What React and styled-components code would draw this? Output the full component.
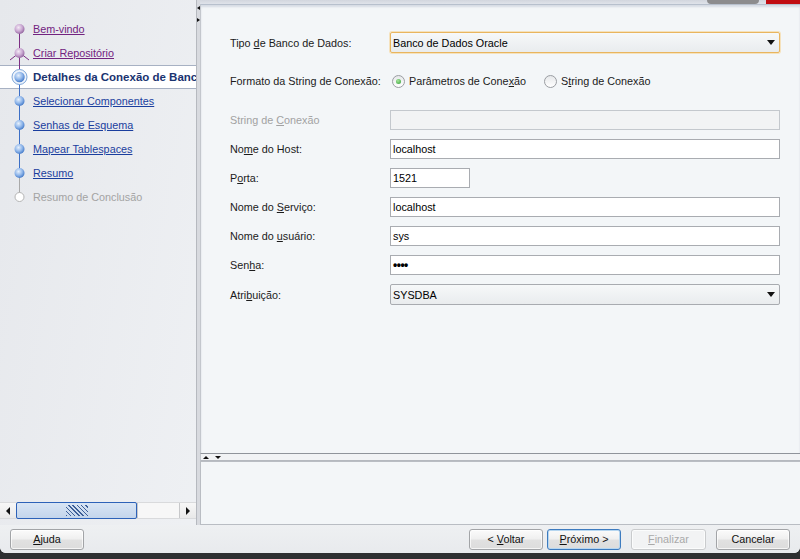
import React from 'react'
import styled, { createGlobalStyle, css } from 'styled-components'

const GlobalStyle = createGlobalStyle`
  html, body {
    margin: 0;
    padding: 0;
    background: #2e2f31;
  }
  body {
    font-family: "Liberation Sans", Arial, sans-serif;
    font-size: 10.8px;
    color: #1b1b1b;
  }
`

const lineColors = {
  purple: '#7d2f84',
  blue: '#3c6fc6',
  gray: '#a9a9a9',
}

const steps = [
  { label: 'Bem-vindo', state: 'visited', bottom: 'purple' },
  { label: 'Criar Repositório', state: 'visited', top: 'purple', bottom: 'purple', fork: true },
  { label: 'Detalhes da Conexão de Banco de Dados', state: 'current', top: 'purple', bottom: 'blue' },
  { label: 'Selecionar Componentes', state: 'todo', top: 'blue', bottom: 'blue' },
  { label: 'Senhas de Esquema', state: 'todo', top: 'blue', bottom: 'blue' },
  { label: 'Mapear Tablespaces', state: 'todo', top: 'blue', bottom: 'blue' },
  { label: 'Resumo', state: 'todo', top: 'blue', bottom: 'gray' },
  { label: 'Resumo de Conclusão', state: 'off', top: 'gray' },
]

const StepIcon = ({ step, id }) => {
  const gid = `sphere-${id}`
  const purple = step.state === 'visited'
  return (
    <svg width="33" height="24" viewBox="0 0 33 24">
      <defs>
        <radialGradient id={gid} cx="0.4" cy="0.35" r="0.7">
          <stop offset="0" stopColor={purple ? '#f3e9f5' : '#e6f0fc'} />
          <stop offset="0.55" stopColor={purple ? '#c9a7d1' : '#8fb6ea'} />
          <stop offset="1" stopColor={purple ? '#8b5b98' : '#3a72c4'} />
        </radialGradient>
      </defs>
      {step.top && (
        <line x1="19.5" y1="0" x2="19.5" y2="11" stroke={lineColors[step.top]} />
      )}
      {step.bottom && (
        <line x1="19.5" y1="12" x2="19.5" y2="24" stroke={lineColors[step.bottom]} />
      )}
      {step.fork && (
        <g stroke={lineColors.purple} strokeWidth="1">
          <line x1="19" y1="12" x2="10" y2="19" />
          <line x1="20" y1="12" x2="29" y2="19" />
        </g>
      )}
      {step.state === 'current' && (
        <>
          <circle cx="19.5" cy="12" r="7.5" fill="#eef4fc" stroke="#7ea6d8" />
          <circle cx="19.5" cy="12" r="5.2" fill={`url(#${gid})`} />
        </>
      )}
      {(step.state === 'visited' || step.state === 'todo') && (
        <circle cx="19.5" cy="12" r="5" fill={`url(#${gid})`} />
      )}
      {step.state === 'off' && (
        <circle cx="19.5" cy="12" r="4.5" fill="#ffffff" stroke="#b4b4b4" />
      )}
    </svg>
  )
}

const Key = styled.span`
  text-decoration: underline;
`

const Window = styled.div`
  width: 800px;
  height: 559px;
  display: flex;
  flex-direction: column;
  background: #2e2f31;
  overflow: hidden;
`

const Body = styled.div`
  height: 553px;
  display: flex;
  flex-direction: column;
  background: linear-gradient(100deg, #e6e8ec 0%, #eff1f4 35%, #e9ebef 60%, #edeff2 100%);
  border-radius: 0 0 6px 6px;
  overflow: hidden;
`

const Main = styled.div`
  height: 525px;
  display: flex;
`

const Nav = styled.nav`
  width: 196px;
  display: flex;
  flex-direction: column;
  overflow: hidden;
`

const StepList = styled.ul`
  flex: 1;
  list-style: none;
  margin: 0;
  padding: 17px 0 0;
`

const Step = styled.li`
  height: 24px;
  display: flex;
  align-items: center;
  white-space: nowrap;
  box-sizing: border-box;
  svg {
    flex: none;
  }
  ${(p) =>
    p.$current &&
    css`
      background: #ffffff;
      border-top: 1px solid #a7b1c3;
      border-bottom: 1px solid #a7b1c3;
      svg {
        margin: -1px 0;
      }
    `}
`

const StepLabel = styled.span`
  ${(p) =>
    p.$state === 'visited' &&
    css`
      color: #72237f;
      text-decoration: underline;
    `}
  ${(p) =>
    p.$state === 'todo' &&
    css`
      color: #1a3e9e;
      text-decoration: underline;
    `}
  ${(p) =>
    p.$state === 'current' &&
    css`
      color: #1a3370;
      font-weight: bold;
      font-size: 11.5px;
    `}
  ${(p) =>
    p.$state === 'off' &&
    css`
      color: #a3a3a3;
    `}
`

const ScrollBar = styled.div`
  height: 17px;
  margin-bottom: 6px;
  display: flex;
  background: #f2f3f4;
  border-top: 1px solid #d9dadc;
  border-bottom: 1px solid #d9dadc;
  box-sizing: border-box;
`

const ArrowButton = styled.div`
  width: 16px;
  display: flex;
  align-items: center;
  justify-content: center;
  background: linear-gradient(#f7f7f7, #e9e9e9);
  &::before {
    content: '';
    border-top: 4px solid transparent;
    border-bottom: 4px solid transparent;
    ${(p) =>
      p.$dir === 'left'
        ? css`border-right: 4px solid #111;`
        : css`border-left: 4px solid #111;`}
  }
`

const Thumb = styled.div`
  width: 119px;
  margin-top: -1px;
  margin-bottom: -1px;
  border: 1px solid #2d62b8;
  border-radius: 2px;
  background: linear-gradient(#d9e5f4, #c3d5ec);
  display: flex;
  align-items: center;
  justify-content: center;
  &::after {
    content: '';
    width: 22px;
    height: 11px;
    background: repeating-linear-gradient(
      45deg,
      #3d5f98 0px,
      #3d5f98 1px,
      transparent 1px,
      transparent 3px
    );
  }
`

const Track = styled.div`
  flex: 1;
  background: #f7f7f7;
  border-left: 1px solid #c7c8ca;
  border-right: 1px solid #c7c8ca;
`

const VSplit = styled.div`
  width: 4px;
  display: flex;
  flex-direction: column;
  align-items: flex-start;
  padding-top: 6px;
  gap: 8px;
  box-sizing: border-box;
  background: #d8dadf;
  border-left: 1px solid #b6b9bf;
`

const TinyArrow = styled.span`
  width: 0;
  height: 0;
  ${(p) =>
    p.$dir === 'left' &&
    css`
      border-top: 2px solid transparent;
      border-bottom: 2px solid transparent;
      border-right: 3px solid #111;
    `}
  ${(p) =>
    p.$dir === 'right' &&
    css`
      border-top: 2px solid transparent;
      border-bottom: 2px solid transparent;
      border-left: 3px solid #111;
    `}
  ${(p) =>
    p.$dir === 'up' &&
    css`
      border-left: 3px solid transparent;
      border-right: 3px solid transparent;
      border-bottom: 3px solid #111;
    `}
  ${(p) =>
    p.$dir === 'down' &&
    css`
      border-left: 3px solid transparent;
      border-right: 3px solid transparent;
      border-top: 3px solid #111;
    `}
`

const RightCol = styled.div`
  flex: 1;
  display: flex;
  flex-direction: column;
`

const Header = styled.div`
  height: 4px;
  display: flex;
  justify-content: flex-end;
  background: linear-gradient(#d2d6de, #dfe3ea);
`

const HeaderBlob = styled.div`
  width: ${(p) => p.$w}px;
  margin-right: ${(p) => p.$gap || 0}px;
  background: ${(p) => p.$color};
  border-radius: 0 0 ${(p) => (p.$round ? '30px 30px' : '0 0')};
`

const FormPanel = styled.section`
  flex: 1;
  background: #f3f6f8;
  border-top: 1px solid #b7c0cd;
  border-left: 1px solid #c3c7cd;
  border-bottom: 1px solid #8f949b;
  box-shadow: inset 0 2px 2px rgba(160, 172, 192, 0.35);
  padding: 27px 0 0 29px;
  display: flex;
  flex-direction: column;
`

const Row = styled.div`
  display: grid;
  grid-template-columns: 160px 390px;
  align-items: center;
  height: ${(p) => p.$h || 20}px;
  margin-top: ${(p) => p.$top || 0}px;
`

const Label = styled.span`
  color: ${(p) => (p.$disabled ? '#a2a2a2' : '#1b1b1b')};
`

const TextBox = styled.div`
  height: 20px;
  width: ${(p) => p.$w || 390}px;
  box-sizing: border-box;
  border: 1px solid ${(p) => (p.$disabled ? '#c4c8cd' : '#a9acb1')};
  background: ${(p) => (p.$disabled ? '#f2f3f4' : '#ffffff')};
  display: flex;
  align-items: center;
  padding-left: 2px;
  color: #000;
`

const Dots = styled.span`
  font-size: 12px;
  font-weight: bold;
  letter-spacing: -0.5px;
  line-height: 1;
`

const Combo = styled.div`
  height: 21px;
  box-sizing: border-box;
  border: 1px solid ${(p) => (p.$focused ? '#e9b55e' : '#a8abb0')};
  box-shadow: ${(p) => (p.$focused ? '0 0 0 1px rgba(246, 214, 150, 0.6)' : 'none')};
  border-radius: 2px;
  background: linear-gradient(#f6f8f9, #e9ecee);
  display: flex;
  align-items: center;
  justify-content: space-between;
  padding: 0 4px 0 2px;
  color: #000;
  &::after {
    content: '';
    border-left: 4px solid transparent;
    border-right: 4px solid transparent;
    border-top: 5px solid #111;
  }
`

const RadioGroup = styled.div`
  display: flex;
  align-items: center;
  padding-left: 2px;
`

const RadioOption = styled.span`
  display: flex;
  align-items: center;
  gap: 4px;
  margin-right: ${(p) => p.$mr || 0}px;
`

const RadioDot = styled.span`
  width: 11px;
  height: 11px;
  border-radius: 50%;
  border: 1px solid #9a9da2;
  background: linear-gradient(#e6e8ea, #ffffff);
  display: flex;
  align-items: center;
  justify-content: center;
  &::after {
    content: '';
    width: 5px;
    height: 5px;
    border-radius: 50%;
    background: ${(p) => (p.$checked ? 'radial-gradient(circle at 40% 35%, #a6e69a, #2f9d35)' : 'transparent')};
  }
`

const HSplit = styled.div`
  height: 6px;
  display: flex;
  align-items: center;
  gap: 6px;
  padding-left: 2px;
  background: #f1f3f5;
  border-left: 1px solid #c3c7cd;
  border-bottom: 1px solid #b5b9bf;
`

const MessagePanel = styled.div`
  height: 64px;
  box-sizing: border-box;
  background: #f3f6f8;
  border: 1px solid #b9bdc3;
  border-right: none;
`

const ButtonBar = styled.div`
  flex: 1;
  display: flex;
  align-items: center;
  padding: 0 10px;
  background: linear-gradient(#eef0f2, #e8eaed);
`

const Button = styled.button`
  font: inherit;
  height: 21px;
  width: ${(p) => p.$w || 74}px;
  margin-left: ${(p) => p.$ml || 0}px;
  padding: 0;
  border-radius: 3px;
  border: 1px solid ${(p) => (p.$default ? '#3d7bbf' : p.disabled ? '#c9cbcd' : '#a2a4a7')};
  background: ${(p) =>
    p.disabled ? '#f2f3f4' : 'linear-gradient(#fbfbfb 0%, #f0f0f0 45%, #e1e1e1 55%, #dcdcdc 100%)'};
  color: ${(p) => (p.disabled ? '#a9a9a9' : '#111')};
  box-shadow: ${(p) => (p.$default ? 'inset 0 0 0 1px #b6d6f0' : 'inset 0 0 0 1px rgba(255,255,255,0.7)')};
`

const Spacer = styled.div`
  flex: 1;
`

export default function App() {
  return (
    <>
      <GlobalStyle />
      <Window>
        <Body>
          <Main>
            <Nav>
              <StepList>
                {steps.map((s, i) => (
                  <Step key={s.label} $current={s.state === 'current'}>
                    <StepIcon step={s} id={i} />
                    <StepLabel $state={s.state}>{s.label}</StepLabel>
                  </Step>
                ))}
              </StepList>
              <ScrollBar>
                <ArrowButton $dir="left" />
                <Thumb />
                <Track />
                <ArrowButton $dir="right" />
              </ScrollBar>
            </Nav>
            <VSplit>
              <TinyArrow $dir="left" />
              <TinyArrow $dir="right" />
            </VSplit>
            <RightCol>
              <Header>
                <HeaderBlob $w={52} $gap={7} $color="#8c8c8e" $round />
                <HeaderBlob $w={34} $color="#c10d12" />
              </Header>
              <FormPanel>
                <Row $h={21}>
                  <Label>
                    Tipo <Key>d</Key>e Banco de Dados:
                  </Label>
                  <Combo $focused>Banco de Dados Oracle</Combo>
                </Row>
                <Row $top={18}>
                  <Label>Formato da String de Conexão:</Label>
                  <RadioGroup>
                    <RadioOption $mr={18}>
                      <RadioDot $checked />
                      <span>
                        Parâmetros de Cone<Key>x</Key>ão
                      </span>
                    </RadioOption>
                    <RadioOption>
                      <RadioDot />
                      <span>
                        S<Key>t</Key>ring de Conexão
                      </span>
                    </RadioOption>
                  </RadioGroup>
                </Row>
                <Row $top={19}>
                  <Label $disabled>
                    String de <Key>C</Key>onexão
                  </Label>
                  <TextBox $disabled />
                </Row>
                <Row $top={9}>
                  <Label>
                    No<Key>m</Key>e do Host:
                  </Label>
                  <TextBox>localhost</TextBox>
                </Row>
                <Row $top={9}>
                  <Label>
                    P<Key>o</Key>rta:
                  </Label>
                  <TextBox $w={80}>1521</TextBox>
                </Row>
                <Row $top={9}>
                  <Label>
                    Nome do <Key>S</Key>erviço:
                  </Label>
                  <TextBox>localhost</TextBox>
                </Row>
                <Row $top={9}>
                  <Label>
                    Nome do <Key>u</Key>suário:
                  </Label>
                  <TextBox>sys</TextBox>
                </Row>
                <Row $top={9}>
                  <Label>
                    Sen<Key>h</Key>a:
                  </Label>
                  <TextBox>
                    <Dots>••••</Dots>
                  </TextBox>
                </Row>
                <Row $top={9} $h={21}>
                  <Label>
                    Atri<Key>b</Key>uição:
                  </Label>
                  <Combo>SYSDBA</Combo>
                </Row>
              </FormPanel>
              <HSplit>
                <TinyArrow $dir="up" />
                <TinyArrow $dir="down" />
              </HSplit>
              <MessagePanel />
            </RightCol>
          </Main>
          <ButtonBar>
            <Button>
              <Key>A</Key>juda
            </Button>
            <Spacer />
            <Button>
              &lt; <Key>V</Key>oltar
            </Button>
            <Button $ml={4} $default>
              <Key>P</Key>róximo &gt;
            </Button>
            <Button $ml={10} $w={75} disabled>
              <Key>F</Key>inalizar
            </Button>
            <Button $ml={10}>Cancelar</Button>
          </ButtonBar>
        </Body>
      </Window>
    </>
  )
}
